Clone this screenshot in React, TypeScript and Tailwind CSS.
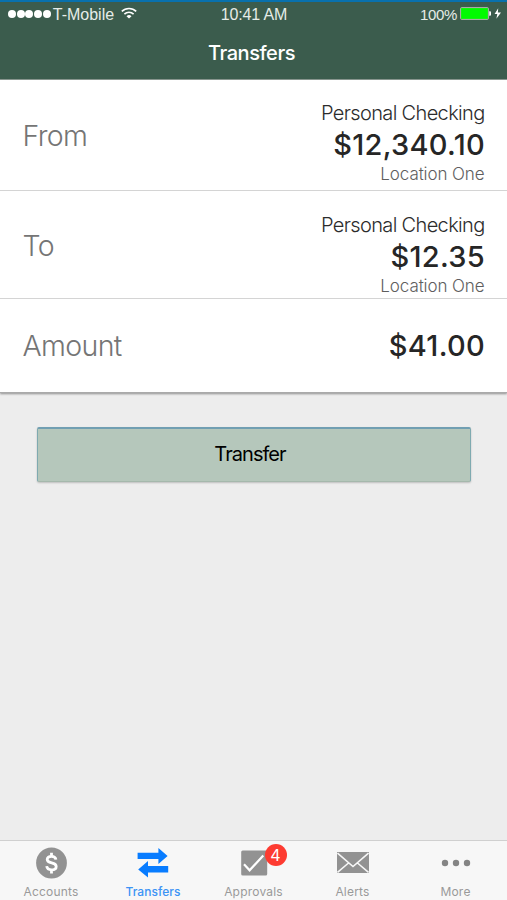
import React from 'react';

interface Account {
  label: string;
  name?: string;
  amount: string;
  location?: string;
}

const FROM: Account = { label: 'From', name: 'Personal Checking', amount: '$12,340.10', location: 'Location One' };
const TO: Account = { label: 'To', name: 'Personal Checking', amount: '$12.35', location: 'Location One' };

const StatusBar: React.FC = () => (
  <div className="grid h-6 grid-cols-3 items-center pl-2 pr-[6px] font-['Liberation_Sans',sans-serif] text-[16px] leading-none text-[#e6ece8]">
    <div className="flex items-center">
      <div className="flex gap-[0.7px]">
        {[0, 1, 2, 3, 4].map((dot) => (
          <span key={dot} className="h-2 w-2 rounded-full bg-white" />
        ))}
      </div>
      <span className="ml-[2px] pt-[2px]">T-Mobile</span>
      <svg className="-mt-[2px] ml-[7px] h-3 w-4 shrink-0" viewBox="0 0 16 12" fill="none" stroke="white" strokeWidth="1.6">
        <path d="M.8 4.4a10.3 10.3 0 0 1 14.4 0M3.4 7.1a6.6 6.6 0 0 1 9.2 0" />
        <path d="M8 11.6 5.5 9.2a3.6 3.6 0 0 1 5 0z" fill="white" stroke="none" />
      </svg>
    </div>
    <span className="pr-px pt-[2px] text-center tracking-[-0.15px]">10:41 AM</span>
    <div className="-mt-px flex items-center justify-end">
      <span className="mr-[3px] pt-px text-[15px] tracking-[-0.35px]">100%</span>
      <svg className="h-[13px] w-[41px] shrink-0" viewBox="0 0 41 13">
        <rect x=".6" y=".6" width="27.8" height="11.8" rx="1" fill="#00fb00" stroke="#b9a9b4" strokeWidth="1" />
        <path d="M29.2 4.3h.8a1 1 0 0 1 1 1v2.4a1 1 0 0 1-1 1h-.8z" fill="white" />
        <path d="M38.2 1.2 34.6 7h2.7l-.9 4.8L41 5.6h-3.1z" fill="white" />
      </svg>
    </div>
  </div>
);

const Details: React.FC<{ account: Account }> = ({ account }) => (
  <div className="flex flex-col items-end">
    <span className="-mr-[0.6px] text-[20px] font-light leading-6 tracking-[-0.65px] text-[#2c2c2c]">{account.name}</span>
    <span className="-mr-px mt-[2px] text-[29px] font-medium leading-9 tracking-[0.3px] text-[#262626]">{account.amount}</span>
    <span className="-mr-[0.5px] mt-px text-[17px] font-light leading-5 tracking-[-0.1px] text-[#5e5e5e]">{account.location}</span>
  </div>
);

const RowLabel: React.FC<{ text: string }> = ({ text }) => (
  <span className="-ml-[0.5px] text-[28.5px] font-light leading-9 tracking-[-0.65px] text-[#757575]">{text}</span>
);

const AccountsIcon: React.FC = () => (
  <svg className="h-8 w-8" viewBox="0 0 32 32" fill="none">
    <circle cx="16.5" cy="16" r="15.4" fill="#929292" />
    <path d="M20.9 12.6c-.3-2.2-1.9-3.3-4.3-3.3-2.6 0-4.4 1.3-4.4 3.3 0 4.6 9 2.1 9 6.8 0 2.1-1.9 3.4-4.6 3.4-2.8 0-4.6-1.3-4.9-3.7M16.5 5.8V9M16.5 23v3.4" stroke="white" strokeWidth="2.8" />
  </svg>
);

const TransfersIcon: React.FC = () => (
  <svg className="h-8 w-8" viewBox="0 0 32 32" fill="#087cff">
    <path d="M.6 5.8h20.8V1l9.2 8-9.2 8v-5H.6z" />
    <path d="M31.2 19H11v-5L1.2 22.5l9.8 8v-5h20.2z" />
  </svg>
);

const ApprovalsIcon: React.FC = () => (
  <svg className="h-8 w-8" viewBox="0 0 32 32" fill="none">
    <rect x="3.2" y="3.5" width="26" height="25" rx="1.5" fill="#929292" />
    <path d="m6 17.3 5.6 6L25.3 8.5" stroke="white" strokeWidth="2.2" />
  </svg>
);

const AlertsIcon: React.FC = () => (
  <svg className="h-8 w-8" viewBox="0 0 32 32" fill="none">
    <rect y="5" width="32" height="21" fill="#929292" />
    <path d="m.5 6 15.5 13.5L31.5 6M.5 25.5l11-9.5M31.5 25.5l-11-9.5" stroke="#f7f7f7" strokeWidth="1.6" />
  </svg>
);

const MoreIcon: React.FC = () => (
  <svg className="h-8 w-8" viewBox="0 0 32 32" fill="#848484">
    <circle cx="5" cy="16" r="3.2" />
    <circle cx="16" cy="16" r="3.2" />
    <circle cx="27" cy="16" r="3.2" />
  </svg>
);

const TABS = [
  { label: 'Accounts', icon: AccountsIcon, width: 'w-[102px]' },
  { label: 'Transfers', icon: TransfersIcon, width: 'w-[102px]', active: true },
  { label: 'Approvals', icon: ApprovalsIcon, width: 'w-[99px]', badge: 4 },
  { label: 'Alerts', icon: AlertsIcon, width: 'w-[99px]' },
  { label: 'More', icon: MoreIcon, width: 'w-[105px] pl-[2px]' },
];

const TabBar: React.FC = () => (
  <nav className="flex h-[60px] border-t border-[#d0d0d0] bg-[#f7f7f7]">
    {TABS.map(({ label, icon: Icon, width, active, badge }) => (
      <button key={label} className={`${width} flex flex-col items-center pt-[6px]`}>
        <span className="relative">
          <Icon />
          {badge && (
            <span className="absolute -right-[17px] -top-[3px] flex h-[22px] w-[22px] items-center justify-center rounded-full bg-[#fd3b31] text-[16px] leading-none text-white">
              {badge}
            </span>
          )}
        </span>
        <span className={`mt-[5px] text-[12px] leading-4 ${active ? 'font-medium tracking-[0.05px] text-[#3c93f5]' : 'tracking-[0.2px] text-[#9a9a9a]'}`}>
          {label}
        </span>
      </button>
    ))}
  </nav>
);

const App: React.FC = () => {
  return (
    <div className="flex h-[900px] w-[507px] flex-col overflow-hidden bg-[#ededed] font-['Inter',sans-serif]">
      <header className="h-20 border-b border-t-2 border-b-[#8b9a92] border-t-[#0871ad] bg-[#3b5c4d]">
        <StatusBar />
        <h1 className="mt-[11px] pr-[4px] text-center text-[20px] font-medium leading-8 tracking-[-0.45px] text-white">Transfers</h1>
      </header>

      <section className="border-b border-[#aaaaaa] bg-white shadow-[0_1px_2px_rgba(0,0,0,0.4)]">
        <div className="flex h-[111px] items-center justify-between border-b border-[#d4d4d4] px-[23px]">
          <div className="pt-[2px]">
            <RowLabel text={FROM.label} />
          </div>
          <div className="pt-[15px]">
            <Details account={FROM} />
          </div>
        </div>
        <div className="flex h-[108px] items-center justify-between border-b border-[#d4d4d4] px-[23px]">
          <div className="pt-[2px]">
            <RowLabel text={TO.label} />
          </div>
          <div className="pt-[20px]">
            <Details account={TO} />
          </div>
        </div>
        <div className="flex h-[93px] items-center justify-between px-[23px]">
          <RowLabel text="Amount" />
          <span className="-mr-px text-[29px] font-medium leading-9 tracking-[0.3px] text-[#262626]">$41.00</span>
        </div>
      </section>

      <main className="flex-1 pl-[37px] pr-[36px] pt-[34px]">
        <button className="h-[55px] w-full rounded-[2px] border border-b-[#a5b8ac] border-l-[#7faab0] border-r-[#7faab0] border-t-2 border-t-[#719fb2] bg-[#b5c7bb] pb-[3px] pr-[8px] text-[20px] tracking-[-0.95px] text-black shadow-[0_1px_2px_rgba(0,0,0,0.2)]">
          Transfer
        </button>
      </main>

      <TabBar />
    </div>
  );
};

export default App;
